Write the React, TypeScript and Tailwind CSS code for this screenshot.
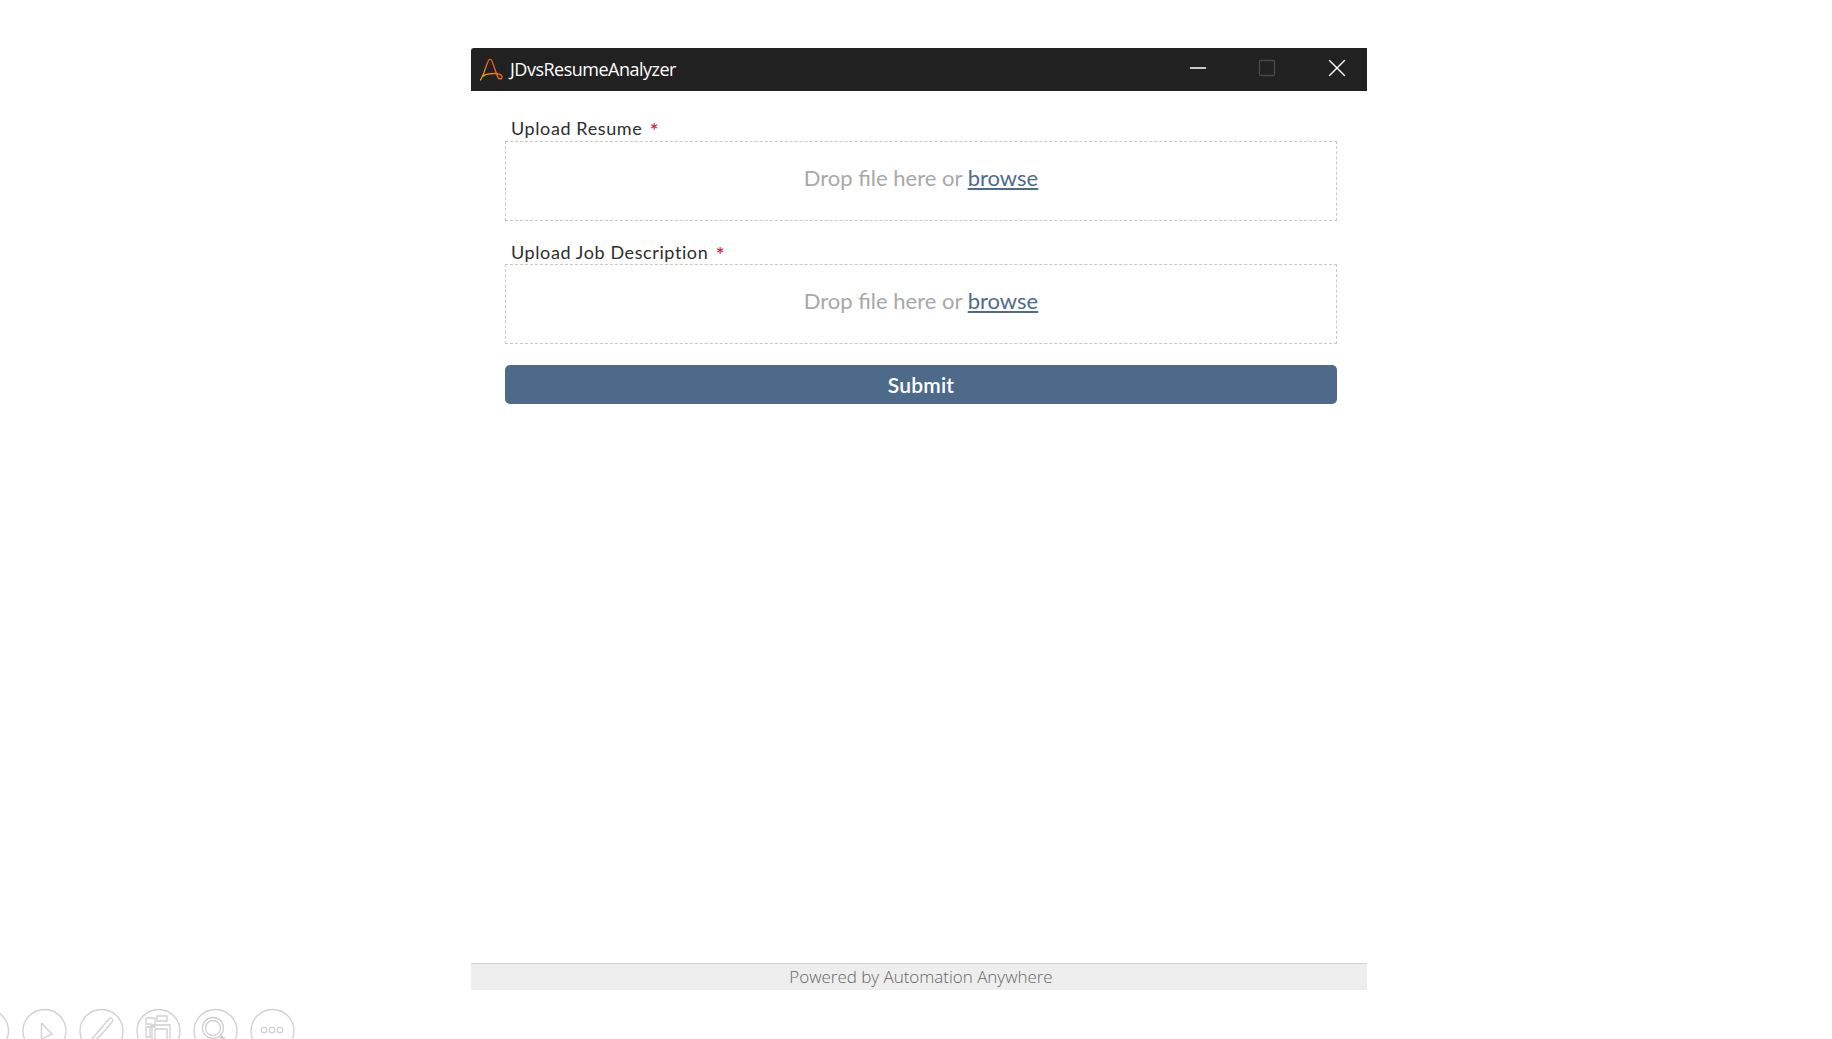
import { Minus, Square, X } from 'lucide-react';

const FIELDS = [
  { id: 1, label: 'Upload Resume', leading: 'leading-[21px]' },
  { id: 2, label: 'Upload Job Description', leading: 'leading-[23px]' },
];

function Logo() {
  return (
    <svg width="24" height="24" viewBox="0 0 24 24" fill="none" strokeWidth="1.3" strokeLinecap="round">
      <defs>
        <linearGradient id="aa" x1="0" y1="1" x2="1" y2="0">
          <stop offset="0" stopColor="#f5b400" />
          <stop offset="0.6" stopColor="#e8641c" />
          <stop offset="1" stopColor="#d9431e" />
        </linearGradient>
      </defs>
      <path d="M1.5 22 C5 17 7 7 9.5 2.5 C10.5 1 12 1 13 3 L18.5 18.5 C19.5 22 23.5 21.5 23 18.5 C22.5 16 19 15.5 15 15.5 C11 15.5 7 15.5 4.5 18" stroke="url(#aa)" />
    </svg>
  );
}

// the player toolbar, cut off by the bottom of the page
function PlayerBar() {
  return (
    <svg className="absolute left-0 bottom-0" width="320" height="32" viewBox="0 0 320 32" fill="none" stroke="#d0d0d0" strokeWidth="1.3">
      <circle cx="-13" cy="24" r="21.5" />
      <circle cx="44.5" cy="24" r="21.5" />
      <path d="M41.5 16 L52 27 L41.5 32" />
      <path d="M41.5 16 V32" />
      <circle cx="101.5" cy="24" r="21.5" />
      <path d="M92 32 L97 26 L109 12 C111 10 114 12 112 15 L100 29 L96 32" />
      <circle cx="158.5" cy="24" r="21.5" />
      <path d="M146 11 H155 V20 H151 V17 H146 Z M157 9 H167 V14 H157 Z M146 20 H150 V30 H146 Z M152 18 H170 V32 M155 22 H167 V32 M152 18 V32 M155 22 V32" />
      <circle cx="215.5" cy="24" r="21.5" />
      <circle cx="213" cy="21" r="10.5" />
      <circle cx="213" cy="21" r="7.5" />
      <path d="M220 29 L225 33" strokeWidth="3" />
      <circle cx="272.5" cy="24" r="21.5" />
      <circle cx="264" cy="23" r="2.7" />
      <circle cx="272" cy="23" r="2.7" />
      <circle cx="280" cy="23" r="2.7" />
    </svg>
  );
}

export default function App() {
  return (
    <div className="relative h-screen overflow-hidden bg-white pt-[48px] pl-[471px]">
      <div className="w-[896px] h-[942px] flex flex-col">
        {/* Title bar */}
        <div className="h-[43px] bg-[#212121] rounded-tl-[3px] flex items-center pl-[8px] text-white">
          <Logo />
          <span className="ml-[7px] -mt-[1px] text-[18px] tracking-[-0.5px]" style={{ fontFamily: '"Open Sans", sans-serif' }}>JDvsResumeAnalyzer</span>
          <div className="ml-auto flex items-center -mt-[3px]">
            <Minus className="w-[26px] h-[26px] text-white" strokeWidth={1.2} absoluteStrokeWidth />
            <Square className="w-[20px] h-[20px] ml-[46px] text-[#4a4a4a]" strokeWidth={1.6} absoluteStrokeWidth />
            <X className="w-[30px] h-[30px] ml-[45px] mr-[15px] text-white" strokeWidth={1.1} absoluteStrokeWidth />
          </div>
        </div>

        {/* Form */}
        <div className="flex-1 pt-[27px] pl-[34px] pr-[30px] flex flex-col" style={{ fontFamily: 'Lato, sans-serif' }}>
          {FIELDS.map((field) => (
            <div key={field.id} className="mb-[20px]">
              <div className={`pl-[6px] h-[23px] text-[18px] tracking-[0.6px] text-[#2d2d2d] ${field.leading}`}>
                {field.label} <span className="text-[#d0103a] ml-[2px] text-[22px] leading-[14px] align-[-4px]">*</span>
              </div>
              <div className="h-[80px] border border-dashed border-[#c8c8c8] flex justify-center pt-[21px] text-[22px] leading-[30px] text-[#a8a8a8]">
                <span>Drop file here or <a className="text-[#4f6b8a] underline">browse</a></span>
              </div>
            </div>
          ))}
          <button className="mt-[1px] h-[39px] rounded-[5px] bg-[#4e6a8a] text-white text-[21px] font-semibold tracking-[0.2px]">Submit</button>
        </div>

        {/* Footer */}
        <div className="h-[27px] bg-[#eeeeee] border-t border-[#cfcfcf] flex items-center justify-center pl-[4px] text-[17px] font-light text-[#666666] tracking-[-0.02px]" style={{ fontFamily: '"Open Sans", sans-serif' }}>
          Powered by Automation Anywhere
        </div>
      </div>
      <PlayerBar />
    </div>
  );
}
